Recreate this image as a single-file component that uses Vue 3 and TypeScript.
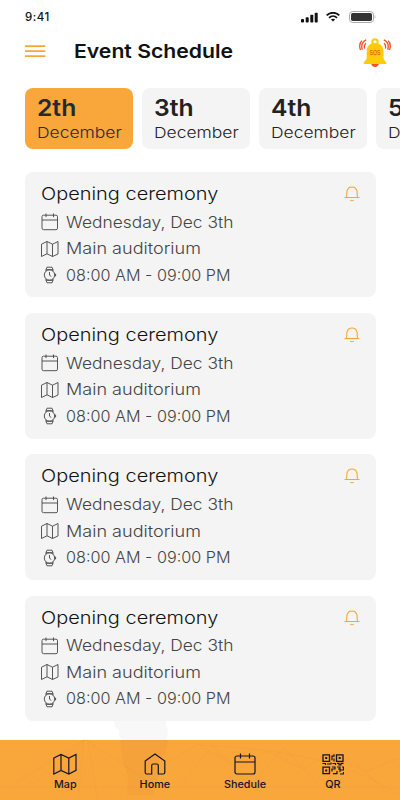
<script setup lang="ts">
interface DayTab { day: string; month: string }
interface EventItem { title: string; date: string; place: string; time: string }

const days: DayTab[] = ['2th', '3th', '4th', '5th'].map((day) => ({ day, month: 'December' }))
const events: EventItem[] = Array.from({ length: 4 }, () => ({
  title: 'Opening ceremony',
  date: 'Wednesday, Dec 3th',
  place: 'Main auditorium',
  time: '08:00 AM - 09:00 PM',
}))
</script>

<template>
  <div class="screen">
    <div class="status">
      <span class="clock">9:41</span>
      <svg class="signal" width="18" height="11" viewBox="0 0 18 11" fill="#111">
        <rect x="0" y="7" width="3" height="3.5" rx=".8" /><rect x="4.7" y="5.2" width="3" height="5.3" rx=".8" />
        <rect x="9.3" y="2.8" width="3" height="7.7" rx=".8" /><rect x="13.7" y=".8" width="3" height="9.7" rx=".8" />
      </svg>
      <svg class="wifi" width="14" height="10" viewBox="0 0 14 10" fill="none" stroke="#111" stroke-width="1.8">
        <path d="M.7 3.4C4.2-.1 9.8-.1 13.3 3.4M3 5.8c2.3-2.2 5.7-2.2 8 0" />
        <path d="M4.9 7.4c1.2-1 3-1 4.2 0L7 9.6z" fill="#111" stroke="none" />
      </svg>
      <svg class="battery" width="27" height="12" viewBox="0 0 27 12">
        <rect x=".5" y=".5" width="24" height="11" rx="3.3" fill="none" stroke="#aaa" />
        <rect x="2" y="2" width="21" height="8" rx="1.8" fill="#333" />
        <path d="M25.7 4.2c1 .5 1 3 0 3.500z" fill="#aaa" />
      </svg>
    </div>

    <header class="header">
      <svg class="menu" width="21" height="13" viewBox="0 0 21 13" stroke="#f9a53a" stroke-width="1.7">
        <path d="M0 1.2h20.3M0 6.2h20.3M0 11.2h20.3" />
      </svg>
      <h1><span class="fit">Event Schedule</span></h1>
      <svg class="sos" width="32" height="30" viewBox="0 0 32 30">
        <path d="M12 25h8c0 2.300-2 4-4 4s-4-1.700-4-4z" fill="#f4511e" />
        <circle cx="16" cy="4" r="2.700" fill="none" stroke="#fccb0a" stroke-width="2" />
        <path d="M7.700 13C7.700 8 11 5 16 5s8.500 3 8.500 8v6.500c0 2.600 1.800 3.500 2.500 4.500.8 1 .4 2-.8 2H5.800c-1.200 0-1.600-1-.8-2 .8-1 2.700-1.900 2.700-4.500z" fill="#fccb0a" />
        <path d="M7.200 1.800C3.300 3.600 2 7.300 3.300 11.700M7 5.200c-1.700 1.500-2 3.200-1.300 5.300M2.800 2.800C.6 5 .2 8.500 1.500 12M24.800 1.800c3.900 1.800 5.200 5.500 3.900 9.900M25 5.200c1.700 1.500 2 3.200 1.300 5.300M29.200 2.800c2.200 2.200 2.600 5.700 1.300 9.200" fill="none" stroke="#f4511e" stroke-width="1.300" />
        <text x="10.600" y="17.200" textLength="11" lengthAdjust="spacingAndGlyphs">SOS</text>
      </svg>
    </header>

    <div class="days">
      <div v-for="(d, i) in days" :key="d.day" class="day" :class="{ active: i === 0 }">
        <strong><span class="fit">{{ d.day }}</span></strong>
        <div class="month"><span class="fit">{{ d.month }}</span></div>
      </div>
    </div>

    <main class="events">
      <article v-for="(e, i) in events" :key="i" class="card">
        <div class="card-top">
          <h2><span class="fit">{{ e.title }}</span></h2>
          <svg class="bell" width="16" height="16" viewBox="0 0 16 16" fill="none" stroke="#f9a53a" stroke-width="1.100">
            <path d="M.5 11.500h15M2.200 11.300C3.300 9.500 2.500 7.500 3 5 3.700 2.400 5.500 1 8 1s4.300 1.400 5 4c.5 2.500-.3 4.500.8 6.300M6.200 14c.8 1 2.800 1 3.600 0" />
          </svg>
        </div>
        <div class="row">
          <svg width="18" height="18" viewBox="0 0 18 18">
            <rect x="1" y="2.200" width="15.500" height="14.500" rx="1.500" /><path d="M1 7h15.500M5 .5v3.600M12.500.5v3.600" />
          </svg>
          <span class="fit date">{{ e.date }}</span>
        </div>
        <div class="row">
          <svg width="18" height="18" viewBox="0 0 18 18">
            <path d="M.5 4.200 6 1.500l5.500 2.700 5.500-2.700v12.500L11.500 16.500 6 13.800.5 16.500zM6 1.500v12.300M11.500 4.200v12.300" />
          </svg>
          <span class="fit place">{{ e.place }}</span>
        </div>
        <div class="row">
          <svg width="18" height="18" viewBox="0 0 18 18">
            <circle cx="8.500" cy="9" r="5.200" />
            <path d="M5 5.100V3.500L6 1.200h5l1 2.300v1.600M5 12.900v1.600l1 2.300h5l1-2.300v-1.600M5 3.700h7M5 14.300h7M8.500 6v3.200l1.800 1.300M13.700 8h.9v2h-.9" />
          </svg>
          <span class="fit time">{{ e.time }}</span>
        </div>
      </article>
    </main>

    <nav class="nav">
      <svg class="scenery" width="400" height="80" viewBox="0 0 400 80">
        <path d="M120 19h49l-4 14-6 5v16l-6 20h-26l1-18-5-14z" fill="#000" opacity=".02" />
        <path d="M114 0h52v5l2 3-1 10-1 1h-44l-3-5v-5l-4-3z" fill="#f8f8f8" />
        <g fill="none" stroke="#000" stroke-width=".6" opacity=".04">
          <path d="M0 66h400M84 17l-6 63M87 17l11 63M85 18 10 66M85 18 30 66M85 18 50 66M86 18l70 48M86 18l50 48M170 40l28-17 42 25 26-18 38 18 26-18 34 21 36-14M180 65l33-41 37 41 34-38 36 38 30-28 38 35M200 24c80 5 140 12 200 50" />
        </g>
      </svg>
      <a class="tab">
        <svg width="24" height="22" viewBox="0 0 24 22">
          <path d="M.8 5 8 1.500l7.800 3.500L23 1.500v15.800L15.800 21 8 17.500.8 21zM8 1.500v16M15.800 5v16" />
        </svg>
        <span>Map</span>
      </a>
      <a class="tab">
        <svg width="22" height="22" viewBox="0 0 22 22">
          <path d="M1.200 8 11 1l9.800 7v11.500q0 1.500-1.500 1.500h-5V12.500q0-1.500-1.500-1.500H9.200q-1.500 0-1.500 1.500V21h-5q-1.500 0-1.500-1.500z" />
        </svg>
        <span>Home</span>
      </a>
      <a class="tab schedule">
        <svg width="22" height="22" viewBox="0 0 22 22">
          <rect x="1" y="3" width="20" height="18" rx="2" /><path d="M1 9h20M6.500.5v5M15.500.5v5" />
        </svg>
        <span>Shedule</span>
      </a>
      <a class="tab">
        <svg width="22" height="22" viewBox="0 0 22 22">
          <path d="M1 1.800h6.500v6.500H1zM14.500 1.800H21v6.500h-6.500zM1 14.200h6.500v6.500H1z" stroke-width="1.300" />
          <path d="M3.200 4h2v2h-2zM16.700 4h2v2h-2zM3.200 16.500h2v2h-2z" fill="#14142b" stroke="none" />
          <path d="M12 1.200v2h-2v4M12 5.500v3M.5 10.500h3v1.500M5 11h4V9.500M10.500 10.500h3v1.500M15 10.300h2v1.500h2v-1.500h2.500M10 14h3v2h-3v2.500M11 20.700h4V18M15 14h3v2h-2M20 14h1.500v3H18v2M18 21h3.500v-2" stroke-width="1.200" />
        </svg>
        <span>QR</span>
      </a>
    </nav>
  </div>
</template>

<style>
body { overflow: hidden; background: #fff; }
</style>

<style scoped>
.screen { width: 400px; height: 800px; overflow: hidden; display: flex; flex-direction: column; background: #fff; font-family: Inter, "Liberation Sans", sans-serif; color: #111; }
.fit { display: inline-block; white-space: nowrap; transform-origin: 0 50%; }
h1, h2 { margin: 0; }
.status { height: 34px; flex: none; display: flex; align-items: center; padding: 0 24px 0 25px; box-sizing: border-box; }
.clock { font-size: 11.500px; font-weight: 500; margin-right: auto; letter-spacing: .5px; }
.signal { margin-right: 7px; }
.wifi { margin-right: 9px; }
.header { height: 54px; flex: none; display: flex; align-items: flex-start; box-sizing: border-box; padding: 3px 9px 0 25px; }
.menu { margin-top: 8px; }
h1 { font-size: 19px; line-height: 28px; font-weight: 600; margin: 1px auto 0 28px; }
h1 .fit { transform: scaleX(1.115); }
.sos { margin-top: 1px; }
.sos text { font: 400 6.500px "Liberation Sans", sans-serif; fill: #e63c16; }
.days { flex: none; display: flex; gap: 8.500px; padding-left: 24.700px; height: 83.800px; }
.day { flex: none; width: 108.500px; height: 60.800px; border-radius: 8px; background: #f4f4f4; box-sizing: border-box; padding: 4.500px 0 0 12px; color: #222; }
.day.active { background: #f9a63b; color: #222b35; }
.day strong { display: block; font-size: 23.500px; line-height: 30px; font-weight: 600; }
.day strong .fit { transform: scaleX(1.050); }
.month { font-size: 15px; line-height: 20px; font-weight: 350; }
.month .fit { transform: scaleX(1.165); }
.events { flex: 1; display: flex; flex-direction: column; gap: 15.800px; padding: 0 24px 0 25px; }
.card { flex: none; height: 125.500px; border-radius: 8px; background: #f4f4f4; box-sizing: border-box; padding: 8px 16px 0; }
.card-top { display: flex; justify-content: space-between; height: 29px; }
h2 { font-size: 17.500px; line-height: 27px; font-weight: 350; color: #111; }
h2 .fit { transform: scaleX(1.140); }
.bell { margin-top: 6px; }
.row { height: 26.500px; display: flex; align-items: center; gap: 7px; color: #444; font-size: 15.500px; font-weight: 300; }
.row svg { fill: none; stroke: #444; stroke-width: .9; }
.date { transform: scaleX(1.122); }
.place { transform: scaleX(1.165); }
.time { transform: scaleX(1.045); }
.nav { position: relative; flex: none; height: 60.500px; background: #f9a63b; display: flex; }
.scenery { position: absolute; left: 0; top: -19px; pointer-events: none; }
.tab { position: relative; width: 89.300px; display: flex; flex-direction: column; align-items: center; padding-top: 13.500px; color: #14142b; font-size: 9.800px; font-weight: 550; line-height: 14px; gap: 2.500px; }
.tab span { transform: scaleX(1.100); }
.schedule { left: 1px; }
.tab:nth-of-type(1) { margin-left: 20.800px; }
.tab svg { height: 22px; fill: none; stroke: #14142b; stroke-width: 1.200; }
</style>
